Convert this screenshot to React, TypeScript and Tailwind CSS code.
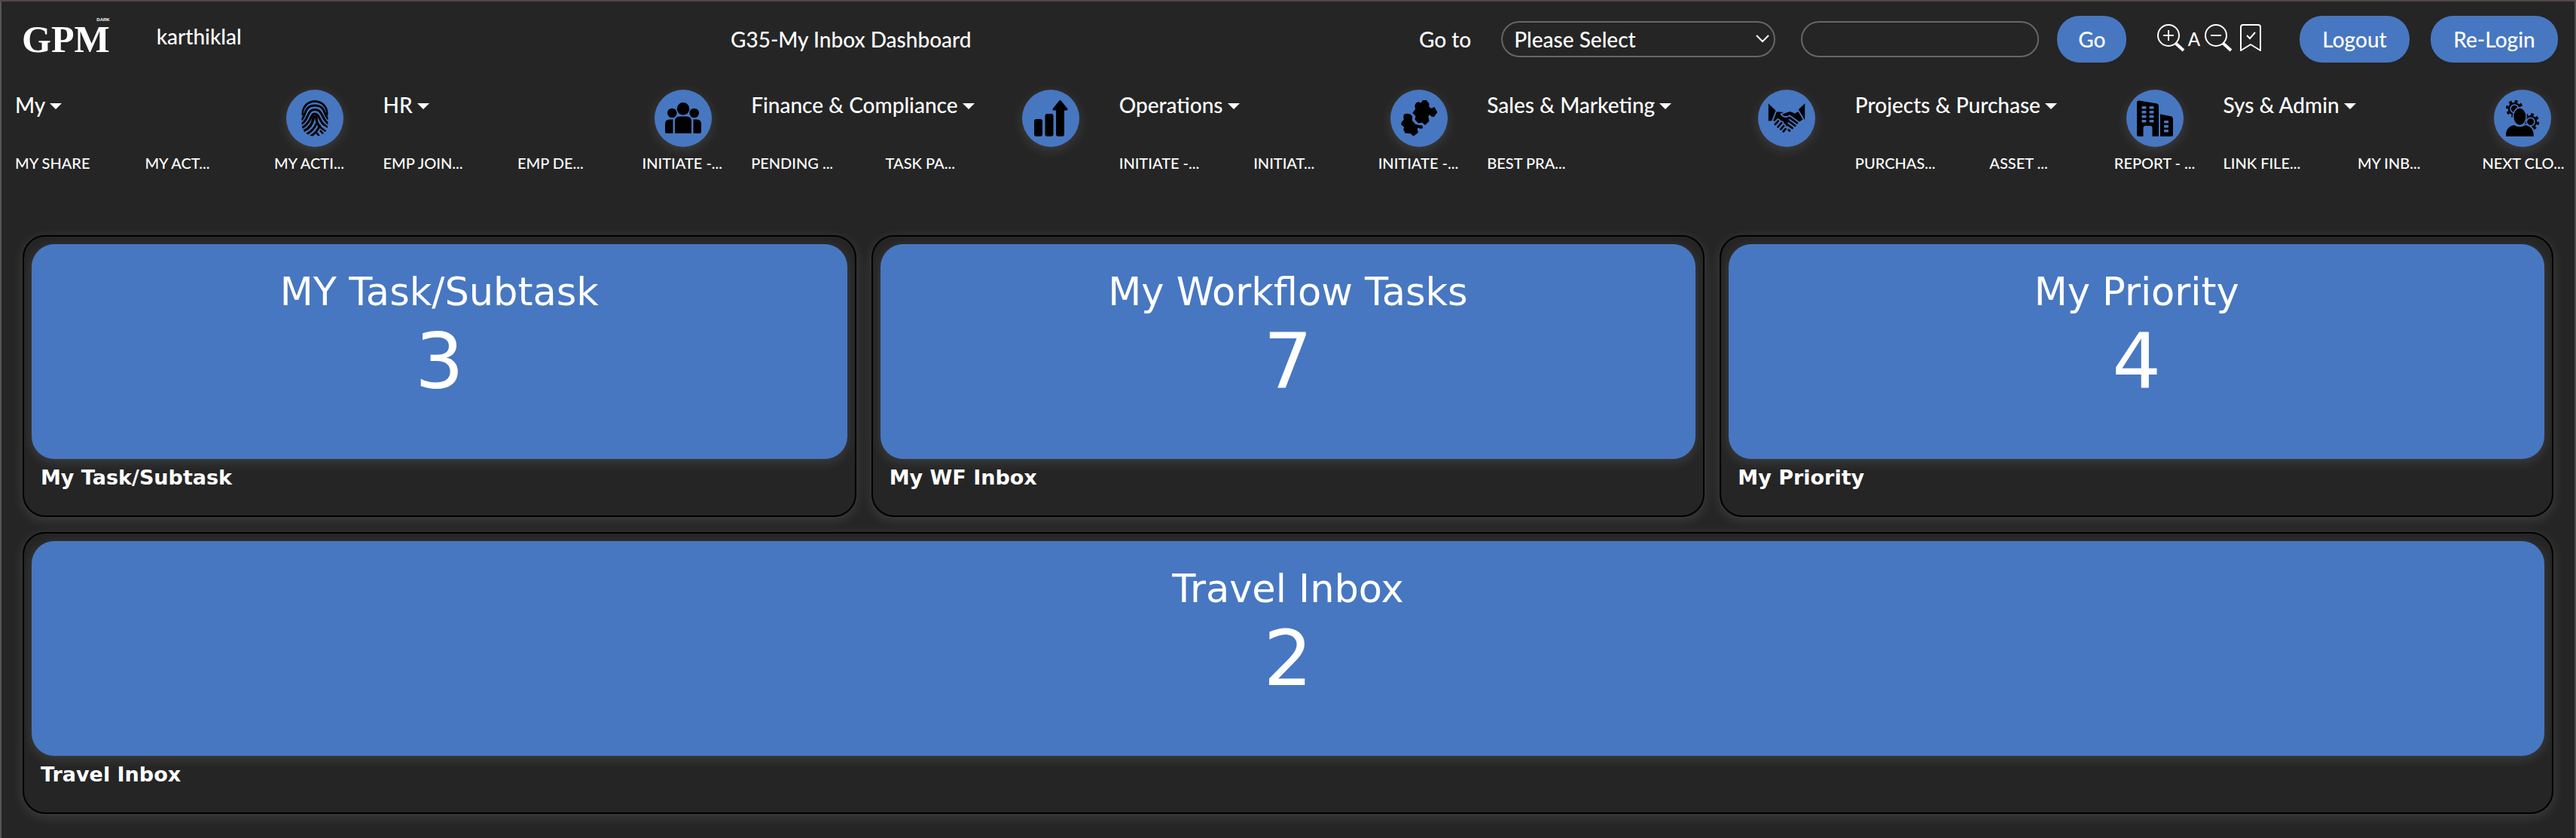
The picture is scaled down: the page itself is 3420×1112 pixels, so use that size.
import type { ReactNode } from "react";
import { GiShakingHands } from "react-icons/gi";

const FingerprintIcon = () => (
  <svg width="36" height="48" viewBox="0 0 36 48" fill="none" stroke="black" strokeWidth="3" aria-hidden="true">
    <clipPath id="finger">
      <path d="M18 0C28 0 35.500 7 35.500 18V32C35.500 42 26 48 18 48S.500 42 .500 32V18C.500 7 8 0 18 0Z" />
    </clipPath>
    <g clipPath="url(#finger)">
      <path d="M1 20C1 9 8 1.500 18 1.500S35 9 35 20" />
      <path d="M0 26C6 22 3 7 18 7S30 21 36 25" />
      <path d="M0 31.500C10 27 7 12.500 18 12.500S27 26 36 31" />
      <path d="M0 37C14 31 11.500 18 18 18S24 29 31 33" />
      <path d="M3 41C12 37 15 31 16 24C16.500 21 20 21 20 24C20 29 22 32 24 34" strokeWidth="3.500" />
      <path d="M7 45C15 41 18 36 20 31" />
      <path d="M12 48C19 44 22 40 25 33" />
      <path d="M23 34L36 44M25 40L32 48M20 43L26 50M27 30L38 38" strokeWidth="2.500" />
    </g>
  </svg>
);

const PeopleIcon = () => (
  <svg width="48" height="42" viewBox="0 0 48 42" aria-hidden="true">
    <circle cx="24" cy="8.300" r="8.300" />
    <circle cx="9.300" cy="14" r="6.300" />
    <circle cx="38.700" cy="14" r="6.300" />
    <path d="M13 40V25q0-6.500 6.500-6.500h9q6.500 0 6.500 6.500v15q0 1-1 1H14q-1 0-1-1Z" />
    <path d="M10.500 22.500H6Q0 22.500 0 28.500V39q0 2 2 2h8.500Z" />
    <path d="M37.500 22.500H42q6 0 6 6V39q0 2-2 2h-8.500Z" />
  </svg>
);

const GrowthIcon = () => (
  <svg width="48" height="48" viewBox="0 0 48 48" aria-hidden="true">
    <rect x="2" y="25" width="11" height="23" rx="3" />
    <rect x="16.500" y="18" width="11" height="30" rx="3" />
    <path d="M31 11h11v34q0 3-3 3h-5q-3 0-3-3Z" />
    <path d="M36.500 1.500L45 12H28Z" stroke="black" strokeWidth="3" strokeLinejoin="round" />
  </svg>
);

const PuzzleIcon = () => (
  <svg width="48" height="48" viewBox="48 48 144 144" stroke="black" strokeWidth="5" strokeLinejoin="round" aria-hidden="true">
    <path d="M110 60L118 57L128 62L136 50H148L158 62L157 74L164 82L172 82L180 78L190 96L178 112L170 110L162 102L154 112L158 130L144 144L132 134L118 137L106 124L109 110L97 98L108 84L105 70Z" />
    <path d="M62 106L72 104L84 106L91 112L90 130L104 146L122 150H130L133 157L126 159L112 154L111 166L114 176L98 188L86 178L66 177L60 164L64 156L51 144L53 136L62 126L60 114Z" />
  </svg>
);

const BuildingIcon = () => (
  <svg width="48" height="48" viewBox="0 0 48 48" aria-hidden="true">
    <path d="M0 3Q0 0 3 .500L27 4.500Q29 5 29 8V48H20.500V37q0-3-3-3h-6q-3 0-3 3v11H2q-2 0-2-2Z" />
    <path d="M31 18.500L46 21.500Q48 22 48 25V46q0 2-2 2H31Z" />
    <g fill="#4777c1">
      {[8, 14, 20, 26].map((y) => (
        <g key={y}>
          <rect x="6.500" y={y} width="6" height="3.500" rx="1" />
          <rect x="16.500" y={y} width="6" height="3.500" rx="1" />
        </g>
      ))}
      {[27, 33, 39].map((y) => (
        <rect key={y} x="36" y={y} width="6" height="3.500" rx="1" />
      ))}
    </g>
  </svg>
);

const Gear = ({ x, y }: { x: number; y: number }) => (
  <g>
    <circle cx={x} cy={y} r="26" />
    <circle cx={x} cy={y} r="29" fill="none" stroke="black" strokeWidth="11" strokeDasharray="11.390 11.390" />
    <circle cx={x} cy={y} r="16" fill="none" stroke="#4777c1" strokeWidth="5" />
  </g>
);

const AdminIcon = () => (
  <svg width="48" height="48" viewBox="48 48 144 144" aria-hidden="true">
    <Gear x={88} y={82} />
    <Gear x={152} y={134} />
    <g stroke="#4777c1" strokeWidth="10" paintOrder="stroke">
      <path d="M54 192V184C55 162 68 150 88 147C98 156 120 156 130 147C150 150 163 162 164 184V192Z" />
      <ellipse cx="109" cy="113" rx="24" ry="33" />
    </g>
  </svg>
);

const ZoomGlyph = ({ plus }: { plus: boolean }) => (
  <svg width="37" height="37" viewBox="0 0 37 37" fill="none" stroke="white" strokeWidth="2" aria-hidden="true">
    <circle cx="15" cy="15" r="14" />
    <path d={plus ? "M8 15h14M15 8v14" : "M8 15h14"} />
    <path d="M24 25L35 35" strokeWidth="4" />
  </svg>
);

const BookmarkGlyph = () => (
  <svg width="28" height="37" viewBox="0 0 28 37" fill="none" stroke="white" strokeWidth="2" aria-hidden="true">
    <path d="M1 35V4q0-3 3-3h20q3 0 3 3v31l-13-8Z" strokeLinejoin="round" />
    <path d="M9 15l4 4 7-8" />
  </svg>
);

type Category = { name: string; icon: ReactNode; links: string[]; cols: string };

const wide = "grid-cols-[179fr_166fr_125fr]";

const categories: Category[] = [
  { name: "My", icon: <FingerprintIcon />, links: ["MY SHARE", "MY ACT...", "MY ACTI..."], cols: "grid-cols-[173fr_172fr_125fr]" },
  { name: "HR", icon: <PeopleIcon />, links: ["EMP JOIN...", "EMP DE...", "INITIATE -..."], cols: wide },
  { name: "Finance & Compliance", icon: <GrowthIcon />, links: ["PENDING ...", "TASK PA..."], cols: wide },
  { name: "Operations", icon: <PuzzleIcon />, links: ["INITIATE -...", "INITIAT...", "INITIATE -..."], cols: wide },
  { name: "Sales & Marketing", icon: <GiShakingHands size={52} />, links: ["BEST PRA..."], cols: wide },
  { name: "Projects & Purchase", icon: <BuildingIcon />, links: ["PURCHAS...", "ASSET ...", "REPORT - ..."], cols: wide },
  { name: "Sys & Admin", icon: <AdminIcon />, links: ["LINK FILE...", "MY INB...", "NEXT CLO..."], cols: wide },
];

const CategoryMenu = ({ name, icon, links, cols }: Category) => (
  <div className={`grid min-w-0 gap-y-1.5 pl-5 ${cols}`}>
    <button type="button" className="col-span-2 flex h-10 items-center gap-1.5 self-start whitespace-nowrap">
      {name}
      <svg width="16" height="8" viewBox="0 0 16 8" fill="white" className="mt-1" aria-hidden="true">
        <path d="M0 0h16L8 8Z" />
      </svg>
    </button>
    <span className="ml-4 flex size-[76px] items-center justify-center rounded-full bg-[#4777c1] text-black shadow-[0_4px_16px_rgba(255,255,255,0.12)]">
      {icon}
    </span>
    {links.map((link, i) => (
      <a key={i} href="#" className="text-xl leading-[30px] whitespace-nowrap">
        {link}
      </a>
    ))}
  </div>
);

const cards = [
  { title: "MY Task/Subtask", count: 3, label: "My Task/Subtask", span: "" },
  { title: "My Workflow Tasks", count: 7, label: "My WF Inbox", span: "" },
  { title: "My Priority", count: 4, label: "My Priority", span: "" },
  { title: "Travel Inbox", count: 2, label: "Travel Inbox", span: "col-span-3" },
];

const pill = "h-[62px] shrink-0 rounded-[30px] bg-[#4777c1]";

export default function App() {
  return (
    <div className="min-h-screen bg-[#252525] font-['Lato',sans-serif] text-[28px] leading-10 font-medium text-white shadow-[inset_0_2px_0_#534747,inset_2px_0_0_#555555,inset_-2px_0_0_#4f4f4f]">
      <header className="grid h-[104px] grid-cols-[970fr_914fr_1536fr] items-center">
        <div className="flex items-center gap-[62px] pl-[29px]">
          <div className="relative font-['Liberation_Serif',serif] text-[50px] leading-[50px] font-bold">
            GPM
            <span className="absolute -top-1 right-0 font-['Liberation_Sans',sans-serif] text-[6px] leading-none">DARK</span>
          </div>
          <span className="pb-2">karthiklal</span>
        </div>
        <h1>G35-My Inbox Dashboard</h1>
        <form className="flex items-center pr-6">
          <label htmlFor="goto" className="mr-10 shrink-0">Go to</label>
          <div className="relative w-[364px]">
            <select id="goto" className="block h-12 w-full appearance-none rounded-3xl border-2 border-[#666666] bg-transparent pl-[15px] leading-[44px]">
              <option>Please Select</option>
            </select>
            <svg width="18" height="11" viewBox="0 0 18 11" fill="none" stroke="white" strokeWidth="2" className="pointer-events-none absolute top-[18px] right-2" aria-hidden="true">
              <path d="M1 1l8 8 8-8" />
            </svg>
          </div>
          <input type="text" aria-label="Go to code" className="ml-[34px] h-12 w-[316px] min-w-0 rounded-3xl border-2 border-[#666666] bg-transparent px-4" />
          <button type="button" className={`ml-6 w-[92px] ${pill}`}>Go</button>
          <div className="ml-auto flex shrink-0 items-center pb-1">
            <button type="button" aria-label="Zoom in"><ZoomGlyph plus /></button>
            <span className="ml-1 pt-1 text-2xl">A</span>
            <button type="button" aria-label="Zoom out" className="ml-1.5"><ZoomGlyph plus={false} /></button>
            <button type="button" aria-label="Bookmark" className="ml-2.5"><BookmarkGlyph /></button>
          </div>
          <button type="button" className={`ml-[51px] w-[146px] ${pill}`}>Logout</button>
          <button type="button" className={`ml-7 w-[169px] ${pill}`}>Re-Login</button>
        </form>
      </header>

      <nav className="grid grid-cols-7 pt-[15px]">
        {categories.map((category) => (
          <CategoryMenu key={category.name} {...category} />
        ))}
      </nav>

      <main className="grid grid-cols-3 gap-x-5 gap-y-5 px-[30px] pt-[81px] pb-8 font-['DejaVu_Sans',sans-serif]">
        {cards.map((card) => (
          <section key={card.label} className={`rounded-[30px] border-2 border-black p-2.5 pb-8 shadow-[0_4px_16px_rgba(255,255,255,0.12)] ${card.span}`}>
            <a href="#" className="block h-[285px] rounded-[30px] bg-[#4777c1] pt-8 text-center font-normal shadow-[0_4px_16px_rgba(255,255,255,0.12)]">
              <h2 className="text-[51px] leading-[64px]">{card.title}</h2>
              <p className="text-[102px] leading-[120px]">{card.count}</p>
            </a>
            <h3 className="mt-[7px] pl-3 text-[27px] leading-9 font-bold">{card.label}</h3>
          </section>
        ))}
      </main>
    </div>
  );
}
